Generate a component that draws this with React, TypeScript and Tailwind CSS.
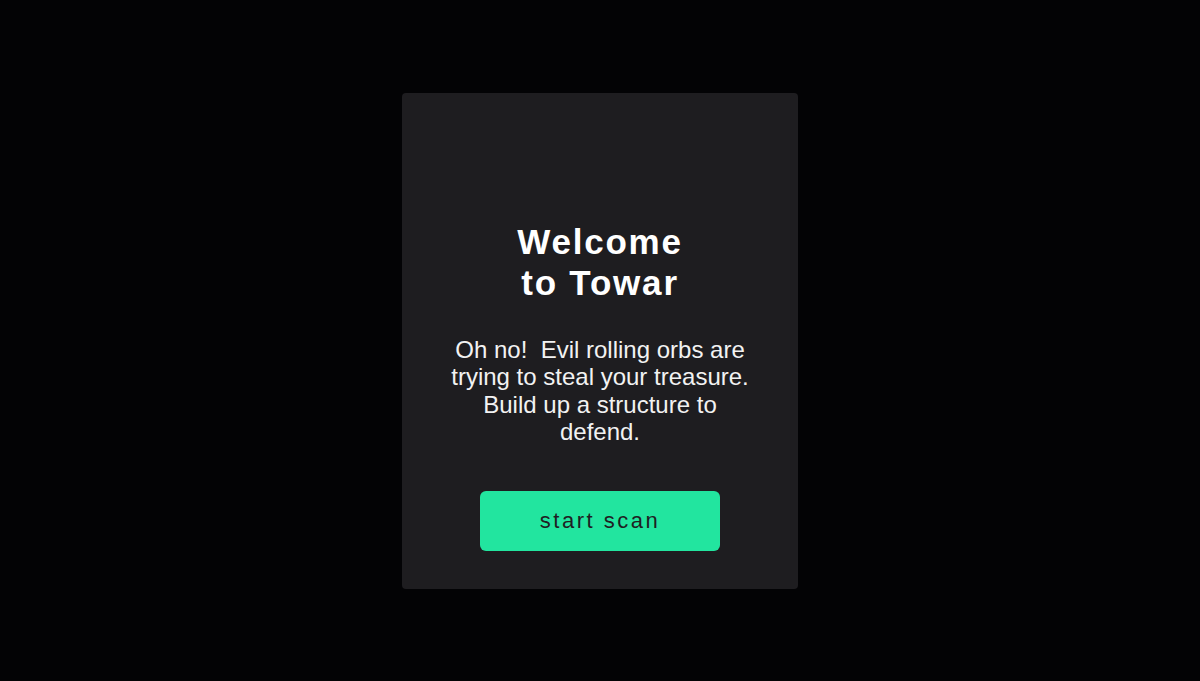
export default function App() {
  return (
    <div className="min-h-screen w-full flex items-center justify-center bg-[#030305] font-['Liberation_Sans',Arial,sans-serif]">
      <div className="w-[396px] h-[496px] rounded bg-[#1e1d20] flex flex-col items-center pt-[128px]">
        {/* Title */}
        <h1 className="text-[35px] leading-[41px] font-bold tracking-[1.8px] text-white text-center">
          Welcome
          <br />
          to Towar
        </h1>

        <p className="mt-[33px] w-[306px] text-[24px] leading-[27.5px] text-[#f2f2f2] text-center whitespace-pre-wrap">
          {"Oh no!  Evil rolling orbs are trying to steal your treasure. Build up a structure to defend."}
        </p>

        <button className="mt-[45px] w-[240px] h-[60px] rounded-md bg-[#22e59f] text-[22px] tracking-[2.5px] text-[#1f1e23]">
          start scan
        </button>
      </div>
    </div>
  )
}
